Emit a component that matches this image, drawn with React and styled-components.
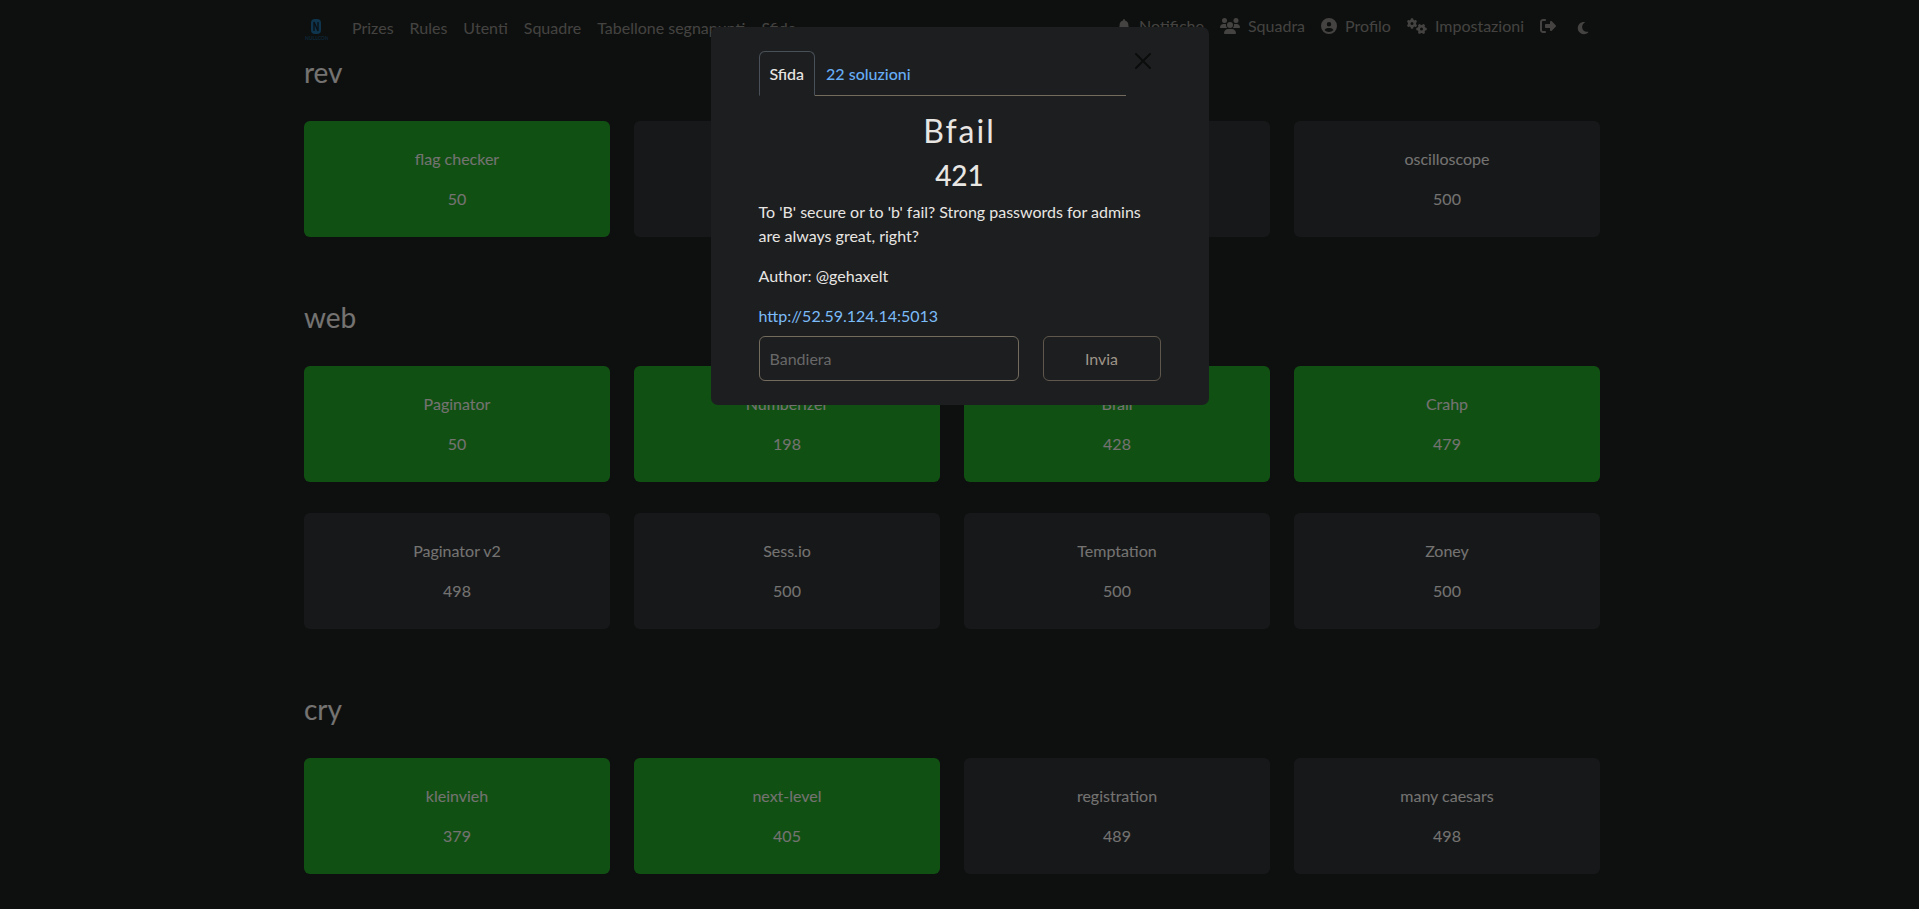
import React from "react";
import styled, { createGlobalStyle } from "styled-components";
import {
  FaBell,
  FaUsers,
  FaCircleUser,
  FaGears,
  FaRightFromBracket,
  FaMoon,
} from "react-icons/fa6";

const GlobalStyle = createGlobalStyle`
  *, *::before, *::after { box-sizing: border-box; }
  html { background: #1c201e; }
  body {
    margin: 0;
    padding-right: 15px;
    overflow: hidden;
    background: #1c201e;
    color: #e8e6e3;
    font-family: Lato, "Liberation Sans", sans-serif;
    font-size: 16px;
    line-height: 24px;
  }
  h2, h3, p, ul { margin: 0; padding: 0; font-weight: 400; }
  button, input { font: inherit; color: inherit; }
`;

const Container = styled.div`
  max-width: 1320px;
  margin: 0 auto;
  padding: 0 12px;
`;

const Navbar = styled(Container).attrs({ as: "nav" })`
  display: flex;
  align-items: center;
  height: 55px;
  color: #898782;
`;

const Brand = styled.a`
  display: flex;
  margin-right: 24px;
`;

const NavList = styled.ul`
  display: flex;
  gap: 16px;
  list-style: none;
  ${(p) => p.$end && "margin-left: auto; padding-bottom: 2px;"}
`;

const NavLink = styled.a`
  display: flex;
  align-items: center;
  gap: 8px;
  min-height: 24px;
  color: inherit;
  text-decoration: none;
  svg { display: block; }
`;

const ThemeButton = styled.button`
  display: flex;
  align-items: center;
  height: 24px;
  margin: 2px 0 0 4px;
  padding: 0 10px 0 0;
  border: 0;
  background: none;
`;

const Category = styled.section`
  margin-bottom: 63px;
`;

const CategoryTitle = styled.h3`
  margin-bottom: 32px;
  font-size: 28px;
  line-height: 34px;
`;

const CardGrid = styled.div`
  display: grid;
  grid-template-columns: repeat(4, 1fr);
  gap: 31px 24px;
`;

const Card = styled.button`
  display: flex;
  flex-direction: column;
  align-items: center;
  gap: 16px;
  padding: 26px 16px;
  border: 0;
  border-radius: 6px;
  background: ${(p) => (p.$solved ? "#22a026" : "#2e3033")};
`;

const Backdrop = styled.div`
  position: fixed;
  inset: 0;
  padding-top: 27px;
  background: rgba(0, 0, 0, 0.5);
`;

const Dialog = styled.div`
  position: relative;
  width: 498px;
  max-width: 100%;
  margin: 0 auto;
  padding: 24px 48px;
  border-radius: 7px;
  background: #1d1e20;
`;

const CloseButton = styled.button`
  position: absolute;
  top: 26px;
  right: 58px;
  display: flex;
  padding: 0;
  border: 0;
  background: none;
  color: #0b0c0c;
`;

const Tabs = styled.ul`
  display: flex;
  margin: 0 35px 16px 0;
  border-bottom: 1px solid #736b5e;
  list-style: none;
`;

const Tab = styled.a`
  display: block;
  margin-bottom: -1px;
  padding: 10px;
  border: 1px solid transparent;
  border-radius: 6px 6px 0 0;
  color: #66adf5;
  font-weight: 500;
  line-height: 23px;
  text-decoration: none;
  ${(p) => p.$active && `
    color: #e8e6e3;
    background: #1d1e20;
    border-color: #495057 #495057 #1d1e20;
  `}
`;

const ChallengeName = styled.h2`
  margin-bottom: 8px;
  font-size: 32px;
  line-height: 38px;
  letter-spacing: 2px;
  text-align: center;
`;

const ChallengeValue = styled.h3`
  margin-bottom: 8px;
  font-size: 28px;
  font-weight: 500;
  line-height: 34px;
  text-align: center;
`;

const Description = styled.div`
  display: flex;
  flex-direction: column;
  gap: 16px;
  margin-bottom: 8px;
  font-weight: 500;
  a { color: #7bbcf8; text-decoration: none; }
`;

const Form = styled.form`
  display: grid;
  grid-template-columns: 260px 1fr;
  gap: 24px;
`;

const FlagInput = styled.input`
  min-width: 0;
  height: 45px;
  padding: 0 10px;
  border: 1px solid #736b5e;
  border-radius: 6px;
  background: transparent;
  &::placeholder { color: #686868; opacity: 1; }
`;

const SubmitButton = styled.button`
  height: 45px;
  border: 1px solid #5f574c;
  border-radius: 6px;
  background: transparent;
  color: #9d9488;
`;

const categories = [
  {
    name: "rev",
    items: [
      ["flag checker", 50, true],
      ["", "", false],
      ["", "", false],
      ["oscilloscope", 500, false],
    ],
  },
  {
    name: "web",
    items: [
      ["Paginator", 50, true],
      ["Numberizer", 198, true],
      ["Bfail", 428, true],
      ["Crahp", 479, true],
      ["Paginator v2", 498, false],
      ["Sess.io", 500, false],
      ["Temptation", 500, false],
      ["Zoney", 500, false],
    ],
  },
  {
    name: "cry",
    items: [
      ["kleinvieh", 379, true],
      ["next-level", 405, true],
      ["registration", 489, false],
      ["many caesars", 498, false],
    ],
  },
];

const Logo = () => (
  <svg width="24" height="24" viewBox="0 0 24 24" role="img" aria-label="Nullcon">
    <rect x="7" y="3" width="10" height="15" rx="4" fill="#1c6a9a" />
    <path d="M10 15V6l4 9V6" fill="none" stroke="#14242e" strokeWidth="1.4" />
    <text x="1" y="24" fontSize="5" fontWeight="700" fill="#1a4f70">NULLCON</text>
  </svg>
);

export default function App() {
  return (
    <>
      <GlobalStyle />
      <Navbar>
        <Brand href="#"><Logo /></Brand>
        <NavList>
          {["Prizes", "Rules", "Utenti", "Squadre", "Tabellone segnapunti", "Sfide"].map((t) => (
            <li key={t}><NavLink href="#">{t}</NavLink></li>
          ))}
        </NavList>
        <NavList $end>
          <li><NavLink href="#"><FaBell size={14} />Notifiche</NavLink></li>
          <li><NavLink href="#"><FaUsers size={20} />Squadra</NavLink></li>
          <li><NavLink href="#"><FaCircleUser size={16} />Profilo</NavLink></li>
          <li><NavLink href="#"><FaGears size={20} />Impostazioni</NavLink></li>
          <li><NavLink href="#" aria-label="Logout"><FaRightFromBracket size={16} /></NavLink></li>
          <li><ThemeButton aria-label="Theme"><FaMoon size={14} /></ThemeButton></li>
        </NavList>
      </Navbar>

      <Container as="main">
        {categories.map((c) => (
          <Category key={c.name}>
            <CategoryTitle>{c.name}</CategoryTitle>
            <CardGrid>
              {c.items.map(([name, value, solved], i) => (
                <Card key={i} $solved={solved}>
                  <span>{name}</span>
                  <span>{value}</span>
                </Card>
              ))}
            </CardGrid>
          </Category>
        ))}
      </Container>

      <Backdrop>
        <Dialog role="dialog" aria-label="Bfail">
          <CloseButton aria-label="Close">
            <svg width="16" height="16" viewBox="0 0 16 16">
              <path d="M1 1l14 14M15 1L1 15" stroke="currentColor" strokeWidth="2" strokeLinecap="round" />
            </svg>
          </CloseButton>
          <Tabs>
            <li><Tab href="#" $active>Sfida</Tab></li>
            <li><Tab href="#">22 soluzioni</Tab></li>
          </Tabs>
          <ChallengeName>Bfail</ChallengeName>
          <ChallengeValue>421</ChallengeValue>
          <Description>
            <p>To 'B' secure or to 'b' fail? Strong passwords for admins are always great, right?</p>
            <p>Author: @gehaxelt</p>
            <p><a href="http://52.59.124.14:5013">http://52.59.124.14:5013</a></p>
          </Description>
          <Form onSubmit={(e) => e.preventDefault()}>
            <FlagInput aria-label="Bandiera" placeholder="Bandiera" />
            <SubmitButton>Invia</SubmitButton>
          </Form>
        </Dialog>
      </Backdrop>
    </>
  );
}
